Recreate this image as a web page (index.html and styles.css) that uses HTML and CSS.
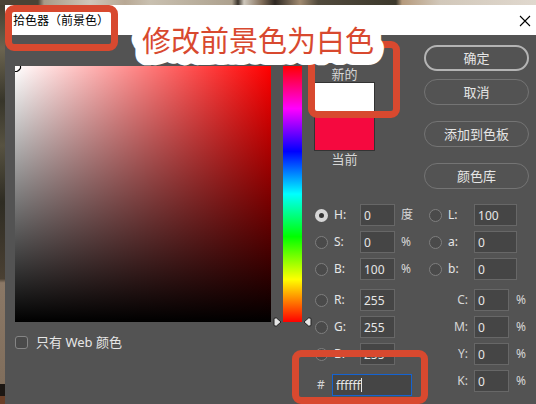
FILE: index.html
```html
<!DOCTYPE html>
<html lang="zh-CN">
<head>
<meta charset="UTF-8">
<title>拾色器（前景色）</title>
<link rel="stylesheet" href="styles.css">
</head>
<body>
  <div class="dialog">
    <header class="titlebar">
      <h1>拾色器（前景色）</h1>
      <button class="close" aria-label="关闭">
        <svg width="12" height="12" viewBox="0 0 12 12"><path d="M1 1l10 10M11 1L1 11" stroke="#000" stroke-width="1.1"/></svg>
      </button>
    </header>

    <main class="content">
      <!-- Colour field -->
      <section class="picker">
        <div class="field">
          <svg class="marker" width="7" height="7" viewBox="0 0 7 7"><path d="M5.500 0v2l-1 1.500-1 1-1.500 1H0" fill="none" stroke="#000" stroke-width="1.200"/></svg>
        </div>
        <div class="web-only">
          <input type="checkbox" id="web">
          <label for="web">只有 Web 颜色</label>
        </div>
      </section>

      <!-- Hue slider -->
      <div class="hue">
        <svg class="arrow arrow-left" width="9" height="10" viewBox="0 0 9 10"><path d="M1.500 1h2L8 5 3.500 9h-2L1 8V2z" fill="#e6e6e6" stroke="#222"/></svg>
        <svg class="arrow arrow-right" width="9" height="10" viewBox="0 0 9 10"><path d="M7.500 1h-2L1 5l4.500 4h2L8 8V2z" fill="#e6e6e6" stroke="#222"/></svg>
      </div>

      <section class="side">
        <div class="top">
          <div class="preview">
            <span>新的</span>
            <div class="swatch"><div class="new"></div><div class="current"></div></div>
            <span>当前</span>
          </div>
          <div class="actions">
            <button class="primary">确定</button>
            <button>取消</button>
            <button class="spaced">添加到色板</button>
            <button class="spaced">颜色库</button>
          </div>
        </div>

        <div class="values">
          <div class="column">
            <div class="group">
              <div class="row"><input type="radio" name="mode" id="h" checked><label for="h">H:</label><input type="text" class="num" value="0" aria-label="H"><span>度</span></div>
              <div class="row"><input type="radio" name="mode" id="s"><label for="s">S:</label><input type="text" class="num" value="0" aria-label="S"><span>%</span></div>
              <div class="row"><input type="radio" name="mode" id="b"><label for="b">B:</label><input type="text" class="num" value="100" aria-label="B"><span>%</span></div>
            </div>
            <div class="group">
              <div class="row"><input type="radio" name="mode" id="r"><label for="r">R:</label><input type="text" class="num" value="255" aria-label="R"></div>
              <div class="row"><input type="radio" name="mode" id="g"><label for="g">G:</label><input type="text" class="num" value="255" aria-label="G"></div>
              <div class="row"><input type="radio" name="mode" id="blue"><label for="blue">B:</label><input type="text" class="num" value="255" aria-label="B"></div>
            </div>
            <div class="row hex"><label for="hex">#</label><input type="text" id="hex" value="ffffff"></div>
          </div>

          <div class="column">
            <div class="group lab">
              <div class="row"><input type="radio" name="mode" id="l"><label for="l">L:</label><input type="text" class="num" value="100" aria-label="L"></div>
              <div class="row"><input type="radio" name="mode" id="la"><label for="la">a:</label><input type="text" class="num" value="0" aria-label="a"></div>
              <div class="row"><input type="radio" name="mode" id="lb"><label for="lb">b:</label><input type="text" class="num" value="0" aria-label="b"></div>
            </div>
            <div class="group cmyk">
              <div class="row"><label for="c">C:</label><input type="text" id="c" class="num" value="0"><span>%</span></div>
              <div class="row"><label for="m">M:</label><input type="text" id="m" class="num" value="0"><span>%</span></div>
              <div class="row"><label for="y">Y:</label><input type="text" id="y" class="num" value="0"><span>%</span></div>
              <div class="row"><label for="k">K:</label><input type="text" id="k" class="num" value="0"><span>%</span></div>
            </div>
          </div>
        </div>
      </section>
    </main>
  </div>

  <!-- Tutorial annotations -->
  <div class="mark mark-title"></div>
  <div class="mark mark-new"></div>
  <div class="mark mark-hex"></div>
  <svg class="note" width="260" height="70" viewBox="0 0 260 70">
    <text x="14" y="47">修改前景色为白色</text>
  </svg>
</body>
</html>
```

FILE: styles.css
```css
*{box-sizing:border-box;}
body{
  margin:0;
  min-height:100vh;
  padding:5px 0 0 5px;
  position:relative;
  overflow:hidden;
  display:flex;
  font:12px/16px "Noto Sans","Noto Sans CJK SC",sans-serif;
  color:#e6e6e6;
  /* strips of the photo behind the dialog */
  background:
    linear-gradient(90deg,#4b4335 0 38px,#a79b87 44px,#cfc6b8 90px,#b8a894 125px,#c9c0b0 150px,#ada18e 232px,#3a332b 238px,#cfc8bc 244px,#806c58 262px,#2e2822 275px,#a08a70 300px,#514a3c 318px,#3c382c 396px,#b59a7c 402px,#d2c8ba 440px,#e0d8ce 536px) 0 0/100% 5px no-repeat,
    linear-gradient(#3f3a2c,#6b6450 12%,#37352a 25%,#575241 36%,#2e2c23 50%,#4a4033 69%,#8b7866 70%,#806e5c 95%,#1c1713 95% 98%,#6a3f28 98%);
}
button,input{font:inherit;color:inherit;}
input,button{margin:0;}

.dialog{flex:1;background:#535353;}
.titlebar{
  height:30px;
  padding:1px 5px 0 8px;
  display:flex;
  align-items:center;
  justify-content:space-between;
  background:#fff;
  color:#000;
}
.titlebar h1{margin:0;font-size:12px;font-weight:normal;}
.close{display:flex;padding:0;border:0;background:none;}

.content{display:flex;gap:12px;padding:10px 7px 0 10px;}
.picker{flex:1;margin-top:21px;}
.field{
  height:256px;
  background:linear-gradient(transparent,#000),linear-gradient(90deg,#fff,#f00);
}
.marker{display:block;}
.web-only{display:flex;align-items:center;gap:8px;margin-top:12px;font-size:13px;}
.web-only input{
  appearance:none;
  width:13px;
  height:13px;
  border:1px solid #858585;
  border-radius:3px;
  background:#4a4a4a;
}
.hue{
  position:relative;
  width:19px;
  height:256px;
  margin-top:21px;
  background:linear-gradient(#f00,#f0f,#00f,#0ff,#0f0,#ff0,#f00);
}
.arrow{position:absolute;bottom:-5px;}
.arrow-left{left:-10px;}
.arrow-right{right:-10px;}

.side{width:215px;}
.top{display:flex;justify-content:space-between;font-size:13px;}
.preview{
  width:61px;
  padding-top:21px;
  display:flex;
  flex-direction:column;
  align-items:center;
  color:#d6d6d6;
}
.swatch{align-self:stretch;border:1px solid #333;}
.new{height:34px;background:#fff;}
.current{height:33px;background:#f5093f;}
.actions{display:flex;flex-direction:column;gap:8px;width:105px;}
.actions button{
  height:26px;
  padding:0;
  border:1px solid #747474;
  border-radius:13px;
  background:none;
}
.actions .primary{border:2px solid #b4b4b4;}
.actions .spaced{margin-top:8px;}

/* numeric fields */
.values{display:flex;justify-content:space-between;padding:15px 3px 0 1px;}
.group{display:flex;flex-direction:column;gap:5px;margin-bottom:9px;}
.row{display:flex;align-items:center;height:22px;}
.row label{width:26px;padding-left:6px;}
.row span{margin-left:6px;color:#d6d6d6;}
input[type=radio]{
  appearance:none;
  width:13px;
  height:13px;
  border:1px solid #7e7e7e;
  border-radius:50%;
  background:#4a4a4a;
}
input[type=radio]:checked{border:4px solid #d6d6d6;background:#333;}
input[type=text]{
  width:35px;
  height:22px;
  padding:0 3px;
  border:1px solid #676767;
  background:#454545;
  outline:0;
}
.row label + input{margin-left:6px;}
.lab input[type=text]{width:43px;}
.cmyk label{width:39px;padding:0;text-align:right;color:#d6d6d6;}
.cmyk span{margin-left:7px;}
.row.hex label{width:10px;padding:0;margin-left:2px;color:#d6d6d6;}
.row.hex input{
  width:80px;
  margin-left:5px;
  border-color:#1463d2;
  /* text caret */
  background:linear-gradient(#e6e6e6,#e6e6e6) 28px 3px/1px 14px no-repeat #454545;
}

/* annotations lie over the dialog */
.mark{position:absolute;border:7px solid #d8492f;border-radius:9px;}
.mark-title{left:5px;top:5px;width:113px;height:46px;}
.mark-new{left:308px;top:41px;width:92px;height:77px;}
.mark-hex{left:292px;top:350px;width:136px;height:54px;}
.note{position:absolute;left:128px;top:5px;}
.note text{
  font:29px "Noto Sans CJK SC",sans-serif;
  fill:#d8492f;
  stroke:#fff;
  stroke-width:22px;
  stroke-linejoin:round;
  paint-order:stroke;
}
```
